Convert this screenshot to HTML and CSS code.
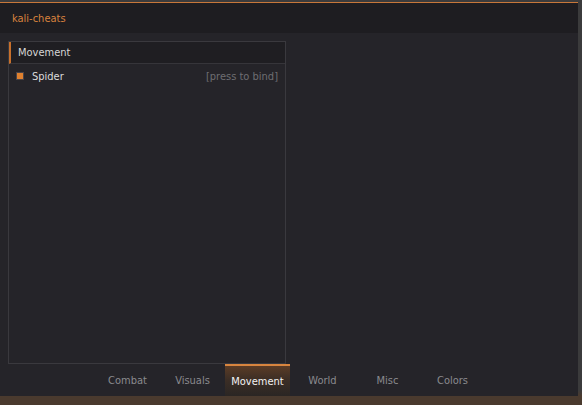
FILE: index.html
```html
<!DOCTYPE html>
<html>
<head>
<meta charset="utf-8">
<link rel="stylesheet" href="styles.css">
</head>
<body>
<div class="window">
  <div class="titlebar">kali-cheats</div>
  <div class="content">
    <div class="panel">
      <div class="panel-header">Movement</div>
      <div class="row">
        <span class="check"></span>
        <span class="label">Spider</span>
        <span class="bind">[press to bind]</span>
      </div>
    </div>
  </div>
  <div class="tabs">
    <div class="tab">Combat</div>
    <div class="tab">Visuals</div>
    <div class="tab active">Movement</div>
    <div class="tab">World</div>
    <div class="tab">Misc</div>
    <div class="tab">Colors</div>
  </div>
</div>
</body>
</html>
```
FILE: styles.css
```css
html, body {
  margin: 0;
  padding: 0;
}
body {
  width: 582px;
  height: 405px;
  overflow: hidden;
  background: linear-gradient(to bottom, #3b3b3c 0, #3b3b3c 390px, #4a3a2e 396px, #4a3a2e 405px);
  font-family: "DejaVu Sans Condensed", "DejaVu Sans", sans-serif;
  font-stretch: condensed;
  font-size: 11px;
}
.window {
  width: 578px;
  height: 393px;
  margin-top: 2px;
  border-top: 1px solid #c8773a;
  background: #252429;
  display: flex;
  flex-direction: column;
}
.titlebar {
  height: 29px;
  line-height: 29px;
  padding: 1px 0 0 12px;
  background: #1e1d21;
  color: #d8823e;
  font-size: 11px;
}
.content {
  flex: 1;
  padding: 8px 0 0 8px;
  display: flex;
  flex-direction: column;
}
.panel {
  width: 276px;
  flex: 1;
  border: 1px solid #3a393e;
  border-bottom: none;
  box-shadow: inset 0 -1px 0 #3a393e;
}
.panel-header {
  height: 20px;
  line-height: 20px;
  padding-top: 1px;
  border-left: 2px solid #c8702c;
  border-bottom: 1px solid #36353a;
  background: #1f1e22;
  color: #d6d6d6;
  padding-left: 7px;
}
.row {
  display: flex;
  align-items: center;
  height: 22px;
  padding: 1px 7px 0 7px;
}
.check {
  width: 6px;
  height: 6px;
  background: #e0812f;
  border: 1px solid #4a4448;
  margin-right: 8px;
}
.label {
  color: #dcdcdc;
  flex: 1;
}
.bind {
  color: #6e6e72;
}
.tabs {
  height: 32px;
  display: flex;
  justify-content: center;
  padding-left: 2px;
}
.tab {
  width: 65px;
  text-align: center;
  line-height: 32px;
  padding-top: 1px;
  color: #8a8a8e;
}
.tab.active {
  color: #f2f2f2;
  line-height: 30px;
  border-top: 2px solid #d8853f;
  background: linear-gradient(to bottom, #5b3c26 0%, #3c2e25 45%, #2a2624 100%);
}
```
